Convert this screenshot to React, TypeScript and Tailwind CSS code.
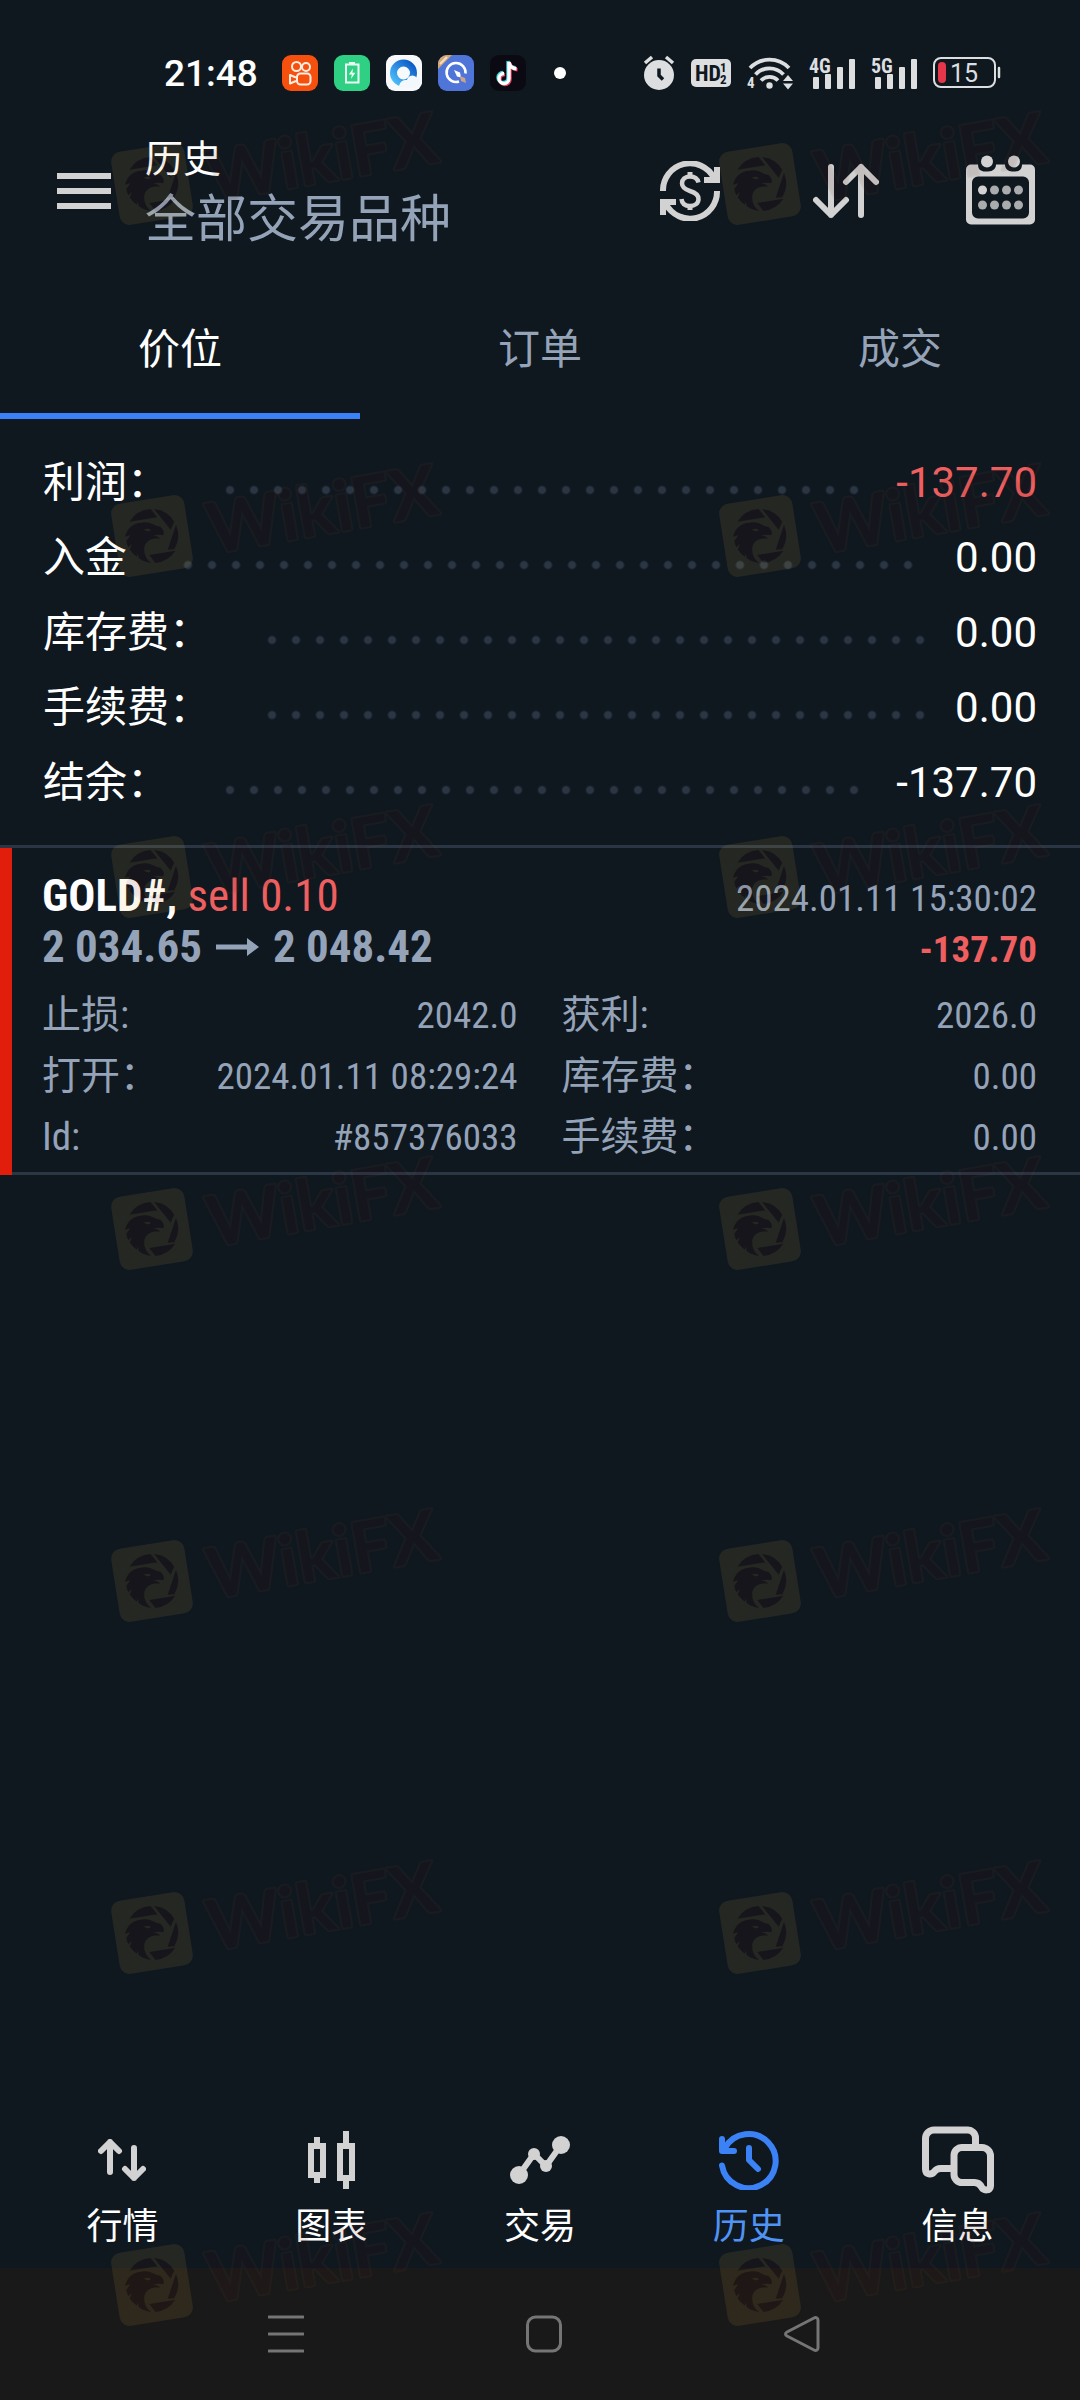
import type { ReactNode } from 'react';

const GREY = '#d2d2d2';
const STATUS = '#dcdee0';

/* ---------- Status bar ---------- */

function KuaishouIcon() {
  return (
    <svg viewBox="0 0 36 36" className="size-9">
      <rect width="36" height="36" rx="9" fill="#f6500f" />
      <g fill="none" stroke="#fdeee4" strokeWidth="2">
        <circle cx="14.5" cy="11.5" r="4.5" />
        <circle cx="24" cy="12" r="4" />
        <rect x="15" y="18.500" width="13.500" height="11" rx="3.500" />
        <path d="M14 22.500 8 20v8.500l6-2.500" strokeLinejoin="round" />
      </g>
    </svg>
  );
}

function BatteryAppIcon() {
  return (
    <svg viewBox="0 0 36 36" className="size-9">
      <rect width="36" height="36" rx="9" fill="#2fcf84" />
      <rect x="15" y="7" width="6" height="3" fill="#e9fff4" />
      <rect x="12" y="9.500" width="12.500" height="18" fill="none" stroke="#e9fff4" strokeWidth="2" />
      <path d="M19 13.500 14.800 19.500h3l-.8 4.500 4.400-6.200h-3z" fill="#e9fff4" />
    </svg>
  );
}

function BrowserIcon() {
  return (
    <svg viewBox="0 0 36 36" className="size-9">
      <defs>
        <linearGradient id="ring" x1="0" y1="1" x2="1" y2="0">
          <stop offset="0" stopColor="#4fc0fb" />
          <stop offset="1" stopColor="#0b57c4" />
        </linearGradient>
      </defs>
      <rect width="36" height="36" rx="9" fill="#f7f9fb" />
      <circle cx="17.500" cy="18" r="10" fill="none" stroke="url(#ring)" strokeWidth="7" />
      <path d="M13 31a7 7 0 0 1 8-6 5.500 5.500 0 0 1 10-2 4 4 0 0 1 2 8c-5 3-16 2-20 0z" fill="#f3f8fd" />
    </svg>
  );
}

function RocketIcon() {
  return (
    <svg viewBox="0 0 36 36" className="size-9">
      <defs>
        <clipPath id="rocketClip">
          <rect width="36" height="36" rx="9" />
        </clipPath>
      </defs>
      <g clipPath="url(#rocketClip)">
        <rect width="36" height="36" fill="#4f75d9" />
        <path d="M0 0h14L0 14z" fill="#d3a772" />
        <path d="M2 9 9 2" stroke="#f5dfc0" strokeWidth="2" />
        <path d="M21 26.500a9.500 9.500 0 1 1 6.500-8" fill="none" stroke="#fff" strokeWidth="2.600" />
        <path d="M16 15l6 2.500 1 5-4-1z" fill="#fff" />
        <path d="M22 21l5 2 1 5-5-2z" fill="#d0a287" />
      </g>
    </svg>
  );
}

function DouyinIcon() {
  const note = 'M19 7v16.500a5 5 0 1 1-5-5M19 7c.5 4 3 6.500 7.500 6.800';
  return (
    <svg viewBox="0 0 36 36" className="size-9" fill="none" strokeWidth="3.400">
      <rect width="36" height="36" rx="9" fill="#0b0a12" />
      <path d={note} stroke="#39d5dc" transform="translate(-1 -1)" />
      <path d={note} stroke="#e43f5f" transform="translate(1 1)" />
      <path d={note} stroke="#fff" />
    </svg>
  );
}

function AlarmIcon() {
  return (
    <svg viewBox="0 0 32 36" className="h-9 w-8">
      <circle cx="16" cy="20" r="15" fill={STATUS} />
      <path d="M2 8l7-6M30 8l-7-6" stroke={STATUS} strokeWidth="3.500" />
      <path d="M16 13.500v7l4 4" stroke="#0f171f" strokeWidth="3.500" fill="none" />
    </svg>
  );
}

function HdIcon() {
  return (
    <svg viewBox="0 0 40 36" className="h-9 w-10 font-['Roboto_Condensed'] font-bold">
      <rect y="4" width="40" height="28" rx="5" fill={STATUS} />
      <text x="4" y="26" fontSize="22" fill="#0f171f">HD</text>
      <text x="29" y="17" fontSize="13" fill="#0f171f">1</text>
      <text x="29" y="29" fontSize="13" fill="#0f171f">2</text>
    </svg>
  );
}

function WifiIcon() {
  return (
    <svg viewBox="0 0 46 36" className="h-9 w-[46px] font-['Roboto_Condensed'] font-bold">
      <g fill="none" stroke={STATUS} strokeWidth="3.800">
        <path d="M3 13a27 27 0 0 1 39 0" />
        <path d="M8.500 19.500a19 19 0 0 1 28 0" />
        <path d="M14 25.500a12 12 0 0 1 17 0" />
      </g>
      <circle cx="22.500" cy="30.500" r="3.200" fill={STATUS} />
      <text x="0" y="33" fontSize="15" fill={STATUS}>4</text>
      <path d="M36 26l5-6 5 6zM36 28.500l5 6 5-6z" fill={STATUS} />
    </svg>
  );
}

function SignalIcon({ label }: { label: string }) {
  return (
    <svg viewBox="0 0 46 40" className="h-10 w-[46px] font-['Roboto_Condensed'] font-bold">
      <text x="0" y="20" fontSize="20" fill={STATUS}>{label}</text>
      <g fill={STATUS}>
        <rect x="4" y="24" width="6" height="12" rx="1" />
        <rect x="16" y="21" width="6" height="15" rx="1" />
        <rect x="28" y="14" width="6" height="22" rx="1" />
        <rect x="40" y="6" width="6" height="30" rx="1" />
      </g>
    </svg>
  );
}

function BatteryIcon() {
  return (
    <svg viewBox="0 0 68 32" className="h-8 w-[68px] font-['Roboto']">
      <rect x="1" y="1" width="61" height="29" rx="7" fill="none" stroke={STATUS} strokeWidth="2" />
      <rect x="5" y="5" width="8" height="21" rx="4" fill="#e5364a" />
      <path d="M66 11v9" stroke={STATUS} strokeWidth="2.500" strokeLinecap="round" />
      <text x="17" y="25" fontSize="25" fill={STATUS}>15</text>
    </svg>
  );
}

function StatusBar() {
  return (
    <div className="flex h-[112px] items-center justify-between pt-[34px] pr-[79px] pl-[164px]">
      <div className="flex items-center">
        <span className="mr-6 text-[37px] leading-none font-medium">21:48</span>
        <div className="flex items-center gap-4">
          <KuaishouIcon />
          <BatteryAppIcon />
          <BrowserIcon />
          <RocketIcon />
          <DouyinIcon />
        </div>
        <span className="ml-7 size-3 rounded-full bg-white" />
      </div>
      <div className="flex items-center gap-4">
        <AlarmIcon />
        <HdIcon />
        <WifiIcon />
        <SignalIcon label="4G" />
        <SignalIcon label="5G" />
        <BatteryIcon />
      </div>
    </div>
  );
}

/* ---------- Header ---------- */

function MenuIcon() {
  return (
    <svg viewBox="0 0 54 36" className="h-9 w-[54px]" fill={GREY}>
      <rect width="54" height="6" />
      <rect y="15" width="54" height="6" />
      <rect y="30" width="54" height="6" />
    </svg>
  );
}

function CurrencyIcon() {
  return (
    <svg viewBox="0 0 66 60" className="h-[60px] w-[66px]" fill="none" stroke={GREY}>
      <g strokeWidth="6">
        <path d="M3 30A27 27 0 0 1 54 17" />
        <path d="M57 30A27 27 0 0 1 6 43" />
        <path d="M44 19h13V6" />
        <path d="M16 41H3v13" />
      </g>
      <path
        d="M38.500 21.500c-1-4-4.500-6-8.500-6-5 0-8 3-8 7s3 5.800 8 7.500c6 1.800 8.500 3.800 8.500 8s-3.500 7-8.500 7-8-2.500-8.500-7"
        strokeWidth="4.500"
      />
      <path d="M30 11v6M30 43v6" strokeWidth="5" />
    </svg>
  );
}

function SortIcon() {
  return (
    <svg
      viewBox="0 0 66 60"
      className="h-[60px] w-[66px]"
      fill="none"
      stroke={GREY}
      strokeWidth="6"
      strokeLinecap="round"
      strokeLinejoin="round"
    >
      <path d="M18 6v48M3 39l15 15 15-15" />
      <path d="M48 54V6M33 21 48 6l15 15" />
    </svg>
  );
}

function CalendarIcon() {
  return (
    <svg viewBox="0 0 69 72" className="h-[72px] w-[69px]">
      <path
        fillRule="evenodd"
        fill={GREY}
        d="M5 9.500h7c0 5 3 7 7 7h3c5 0 8-3 8-7h9c0 4 3 7 7 7h3c5 0 7-3 7-7h8a5 5 0 0 1 5 5v50a5 5 0 0 1-5 5H5a5 5 0 0 1-5-5v-50a5 5 0 0 1 5-5zM12 21.500a6 6 0 0 0-6 6v30a6 6 0 0 0 6 6h45a6 6 0 0 0 6-6v-30a6 6 0 0 0-6-6z"
      />
      <circle cx="21" cy="6.500" r="6" fill={GREY} />
      <circle cx="48" cy="6.500" r="6" fill={GREY} />
      <circle cx="16.500" cy="35" r="4.500" fill={GREY} />
      <g fill="#a9abad">
        <circle cx="28.500" cy="35" r="4.500" />
        <circle cx="40.500" cy="35" r="4.500" />
        <circle cx="52.500" cy="35" r="4.500" />
        <circle cx="16.500" cy="50" r="4.500" />
        <circle cx="28.500" cy="50" r="4.500" />
        <circle cx="40.500" cy="50" r="4.500" />
        <circle cx="52.500" cy="50" r="4.500" />
      </g>
    </svg>
  );
}

function Header() {
  return (
    <header className="flex h-[158px] items-center justify-between pr-[45px] pl-[57px]">
      <div className="flex items-center gap-[34px]">
        <button type="button" aria-label="菜单">
          <MenuIcon />
        </button>
        <div className="pt-1">
          <h1 className="text-[38px] leading-[54px]">历史</h1>
          <p className="text-[51px] leading-[68px] text-[#94a3b8]">全部交易品种</p>
        </div>
      </div>
      <div className="flex items-center gap-[87px]">
        <button type="button" aria-label="货币">
          <CurrencyIcon />
        </button>
        <button type="button" aria-label="排序">
          <SortIcon />
        </button>
        <button type="button" aria-label="日历">
          <CalendarIcon />
        </button>
      </div>
    </header>
  );
}

function Tabs() {
  const base = 'h-[149px] border-b-6 pt-4 text-[42px]';
  return (
    <div role="tablist" className="grid grid-cols-3">
      <button type="button" role="tab" aria-selected="true" className={`${base} border-[#3b82f6]`}>
        价位
      </button>
      <button type="button" role="tab" aria-selected="false" className={`${base} border-transparent text-[#94a3b8]`}>
        订单
      </button>
      <button type="button" role="tab" aria-selected="false" className={`${base} border-transparent text-[#94a3b8]`}>
        成交
      </button>
    </div>
  );
}

/* ---------- Summary ---------- */

const summary = [
  { label: '利润：', value: '-137.70', negative: true },
  { label: '入金', value: '0.00' },
  { label: '库存费：', value: '0.00' },
  { label: '手续费：', value: '0.00' },
  { label: '结余：', value: '-137.70' },
];

function Summary() {
  return (
    <dl className="px-[43px] pt-[26px] pb-[25px]">
      {summary.map((row) => (
        <div key={row.label} className="flex h-[75px] items-center text-[42px]">
          <dt>{row.label}</dt>
          <span className="mt-3.5 mr-7 ml-[49px] h-6 flex-1 bg-[radial-gradient(circle,#2b3644_3px,transparent_5px)] bg-size-[24px_24px]" />
          <dd className={row.negative ? 'text-[#f05f5f]' : ''}>{row.value}</dd>
        </div>
      ))}
    </dl>
  );
}

/* ---------- Closed position ---------- */

function Detail({ label, value }: { label: string; value: string }) {
  return (
    <div className="flex h-[61px] items-center justify-between">
      <dt className="text-[39px]">{label}</dt>
      <dd className="text-[37px]">{value}</dd>
    </div>
  );
}

function Position() {
  return (
    <article className="flex border-t-3 border-[#2b3644] font-['Roboto_Condensed','Noto_Sans_CJK_SC',sans-serif]">
      <div className="w-3 bg-[#e11d0b]" />
      <div className="flex-1 border-b-3 border-[#2b3644] pt-[22px] pr-[43px] pb-1 pl-[30px] text-[#94a3b8]">
        <div className="flex h-[51px] items-baseline justify-between leading-[51px]">
          <h2 className="text-[45px] text-[#f05f5f]">
            <span className="font-bold text-white">GOLD#,</span> sell 0.10
          </h2>
          <time className="text-[37px]">2024.01.11 15:30:02</time>
        </div>
        <div className="flex h-[51px] items-baseline justify-between leading-[51px] font-bold">
          <p className="flex items-center gap-[14px] text-[45px]">
            2 034.65
            <svg viewBox="0 0 43 18" className="h-[18px] w-[43px]" fill="#94a3b8">
              <path d="M0 6.500h31V0l12 9-12 9v-6.500H0z" />
            </svg>
            2 048.42
          </p>
          <p className="text-[37px] text-[#f05f5f]">-137.70</p>
        </div>
        <dl className="grid grid-cols-2 gap-x-11 pt-[13px]">
          <Detail label="止损:" value="2042.0" />
          <Detail label="获利:" value="2026.0" />
          <Detail label="打开：" value="2024.01.11 08:29:24" />
          <Detail label="库存费：" value="0.00" />
          <Detail label="Id:" value="#857376033" />
          <Detail label="手续费：" value="0.00" />
        </dl>
      </div>
    </article>
  );
}

/* ---------- Bottom navigation ---------- */

function QuotesIcon() {
  return (
    <svg
      viewBox="0 0 48 42"
      className="h-[42px] w-12"
      fill="none"
      stroke={GREY}
      strokeWidth="6"
      strokeLinecap="round"
      strokeLinejoin="round"
    >
      <path d="M12 33V3M3 12l9-9 9 9" />
      <path d="M36 9v30M27 30l9 9 9-9" />
    </svg>
  );
}

function ChartIcon() {
  return (
    <svg viewBox="0 0 48 58" className="h-[58px] w-12">
      <g fill="none" stroke={GREY} strokeWidth="6">
        <rect x="4" y="15" width="12" height="29" />
        <rect x="33" y="15" width="12" height="32" />
        <path d="M10 6v8M10 45v7M39 0v14M39 48v10" />
      </g>
    </svg>
  );
}

function TradeIcon() {
  return (
    <svg viewBox="0 0 60 48" className="h-12 w-[60px]" fill={GREY}>
      <path d="M9 39 24 18l12 12L51 9" fill="none" stroke={GREY} strokeWidth="6" />
      <circle cx="9" cy="39" r="9" />
      <circle cx="24" cy="18" r="6" />
      <circle cx="36" cy="30" r="6" />
      <circle cx="51" cy="9" r="9" />
    </svg>
  );
}

function HistoryIcon() {
  return (
    <svg
      viewBox="0 0 60 60"
      className="size-[60px]"
      fill="none"
      stroke="#3b82f6"
      strokeWidth="6"
      strokeLinecap="round"
      strokeLinejoin="round"
    >
      <path d="M3 35.500A27 27 0 1 0 6 18" />
      <path d="M3 9v12h12" />
      <path d="M30 18v12l9 9" />
    </svg>
  );
}

function MessagesIcon() {
  return (
    <svg
      viewBox="0 0 72 68"
      className="h-[68px] w-[72px]"
      fill="none"
      stroke={GREY}
      strokeWidth="7"
      strokeLinejoin="round"
    >
      <path d="M53.500 20v-8a8 8 0 0 0-8-8H12a8.500 8.500 0 0 0-8.500 8.500V43c0 6 6 6 8.500 3 1.500-2 4-3.500 6.500-3.500H31" />
      <path d="M40 21.500h20a8.500 8.500 0 0 1 8.500 8.500v30c0 5-7 5-9 1-1.500-3-3.500-4.500-7-4.500H40a8 8 0 0 1-8-8V29.500a8 8 0 0 1 8-8z" />
    </svg>
  );
}

const navItems: { label: string; icon: ReactNode; active?: boolean }[] = [
  { label: '行情', icon: <QuotesIcon /> },
  { label: '图表', icon: <ChartIcon /> },
  { label: '交易', icon: <TradeIcon /> },
  { label: '历史', icon: <HistoryIcon />, active: true },
  { label: '信息', icon: <MessagesIcon /> },
];

function BottomNav() {
  return (
    <nav className="grid grid-cols-5 px-[18px] pb-4">
      {navItems.map((item) => (
        <button
          key={item.label}
          type="button"
          aria-current={item.active ? 'page' : undefined}
          className="flex flex-col items-center gap-2"
        >
          <span className="flex h-[68px] items-center">{item.icon}</span>
          <span className={item.active ? 'text-[36px] leading-[50px] text-[#4f94f5]' : 'text-[36px] leading-[50px]'}>
            {item.label}
          </span>
        </button>
      ))}
    </nav>
  );
}

function SystemBar() {
  return (
    <div className="flex h-[132px] items-center justify-center gap-[222px] bg-[#191919] pl-2">
      <button type="button" aria-label="最近任务">
        <svg viewBox="0 0 36 38" className="h-[38px] w-9" stroke="#757575" strokeWidth="3" strokeLinecap="round">
          <path d="M1 2h34M1 19h34M1 36h34" />
        </svg>
      </button>
      <button type="button" aria-label="主屏幕">
        <svg viewBox="0 0 36 38" className="h-[38px] w-9" fill="none" stroke="#757575" strokeWidth="3">
          <rect x="1.500" y="2" width="33" height="34" rx="8" />
        </svg>
      </button>
      <button type="button" aria-label="返回">
        <svg viewBox="0 0 36 38" className="h-[38px] w-9" fill="none" stroke="#757575" strokeWidth="3" strokeLinejoin="round">
          <path d="M30 3 3 17c-2 1-2 3 0 4l27 14c2 1 4 0 4-2V5c0-2-2-3-4-2z" />
        </svg>
      </button>
    </div>
  );
}

/* ---------- Watermark ---------- */

function Watermark() {
  return (
    <svg viewBox="0 0 340 120" className="h-[120px] w-[340px] overflow-visible opacity-10">
      <rect x="7" y="39" width="74" height="74" rx="10" fill="#e6b43d" transform="rotate(-9 44 76)" />
      <g transform="translate(44 76) scale(0.333) translate(-156 -208)" fill="#5a0d05">
        <path d="M88 165A81 81 0 0 1 152 127l20 25z" />
        <path d="M162 127a81 81 0 0 1 61 38l-11 24z" />
        <path d="M228 174a81 81 0 0 1-5 74l-20 1z" />
        <path d="M226 252a81 81 0 0 1-60 37l-18-24z" />
        <path d="M75 210c5-22 22-42 50-42 26-5 38 10 55 12 10 6 14 18 10 26-10-4-18-1-30-1 12 4 18 6 20 11-20-3-40 4-46 22-5 20 4 40 20 51-12-1-26-5-38-15l-3-14-2 10c-10-6-17-14-22-22l7-16-11 10c-3-7-6-14-6-20l12-16z" />
        <path d="M132 188c8 8 18 7 20 2l-6-4z" fill="#e6b43d" />
      </g>
      <text
        x="104"
        y="94"
        transform="rotate(-10 104 94)"
        className="font-['Lato',sans-serif] text-[70px] font-bold"
        fill="#4f1410"
        stroke="#6b4a2a"
        strokeWidth="4"
        strokeLinejoin="round"
        paintOrder="stroke"
      >
        WikiFX
      </text>
    </svg>
  );
}

function WatermarkRow({ short }: { short?: boolean }) {
  return (
    <div className={short ? 'flex h-[341px] shrink-0 justify-between' : 'flex h-[352px] shrink-0 justify-between'}>
      <Watermark />
      <Watermark />
    </div>
  );
}

function WatermarkLayer() {
  return (
    <div aria-hidden="true" className="pointer-events-none absolute inset-0 flex flex-col overflow-hidden pt-[108px] pr-6 pl-[108px]">
      <WatermarkRow />
      <WatermarkRow short />
      <WatermarkRow />
      <WatermarkRow />
      <WatermarkRow />
      <WatermarkRow />
      <WatermarkRow />
    </div>
  );
}

export default function App() {
  return (
    <div className="relative flex min-h-screen flex-col bg-[#0f171f] font-['Roboto','Noto_Sans_CJK_SC',sans-serif] text-white">
      <StatusBar />
      <Header />
      <main className="flex-1">
        <Tabs />
        <Summary />
        <Position />
      </main>
      <BottomNav />
      <SystemBar />
      <WatermarkLayer />
    </div>
  );
}
